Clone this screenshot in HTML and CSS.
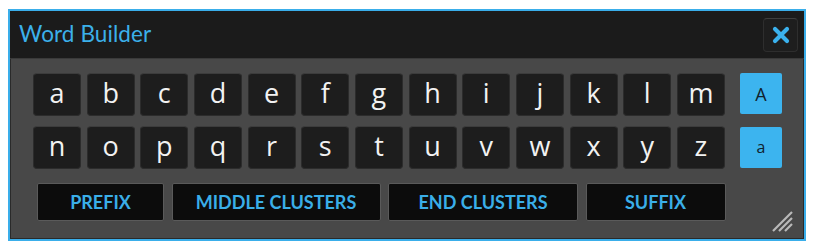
FILE: index.html
```html
<!DOCTYPE html>
<html>
<head>
<meta charset="utf-8">
<link rel="stylesheet" href="styles.css">
</head>
<body>
<div class="window">
  <div class="titlebar">
    <div class="title">Word Builder</div>
    <button class="close" aria-label="Close">
      <svg width="18" height="18" viewBox="0 0 18 18"><path d="M3 3 L15 15 M15 3 L3 15" stroke="#3bb2ee" stroke-width="4.2" stroke-linecap="round"/></svg>
    </button>
  </div>
  <div class="content">
    <div class="keyboard">
      <div class="rows">
        <div class="row">
          <div class="key">a</div><div class="key">b</div><div class="key">c</div><div class="key">d</div><div class="key">e</div><div class="key">f</div><div class="key">g</div><div class="key">h</div><div class="key">i</div><div class="key">j</div><div class="key">k</div><div class="key">l</div><div class="key">m</div>
        </div>
        <div class="row">
          <div class="key">n</div><div class="key">o</div><div class="key">p</div><div class="key">q</div><div class="key">r</div><div class="key">s</div><div class="key">t</div><div class="key">u</div><div class="key">v</div><div class="key">w</div><div class="key">x</div><div class="key">y</div><div class="key">z</div>
        </div>
      </div>
      <div class="cases">
        <div class="case">A</div>
        <div class="case lower">a</div>
      </div>
    </div>
    <div class="groups">
      <div class="group g-prefix">PREFIX</div>
      <div class="group g-middle">MIDDLE CLUSTERS</div>
      <div class="group g-end">END CLUSTERS</div>
      <div class="group g-suffix">SUFFIX</div>
    </div>
    <svg class="grip" width="22" height="22" viewBox="0 0 22 22">
      <path d="M2 21 L21 2 M8 21 L21 8 M14 21 L21 14" stroke="#b9b9b9" stroke-width="2.2"/>
    </svg>
  </div>
</div>
</body>
</html>
```
FILE: styles.css
```css
html, body {
  margin: 0;
  padding: 0;
  background: #ffffff;
}
body {
  padding: 9px 0 0 8px;
}
.window {
  position: relative;
  width: 798px;
  height: 232px;
  box-sizing: border-box;
  border: 2px solid #3aaeea;
  background: #484848;
  box-shadow: inset 0 0 0 1px #2a2a2a;
  display: flex;
  flex-direction: column;
  font-family: "Lato", "Open Sans", sans-serif;
}
.titlebar {
  height: 47px;
  flex: none;
  background: #1b1b1b;
  border-bottom: 1px solid #3a3a3a;
  display: flex;
  align-items: center;
  justify-content: space-between;
  padding: 0 6px 0 9px;
}
.title {
  color: #3bb0ea;
  font-size: 22.5px;
  font-weight: 400;
  letter-spacing: 0.1px;
  margin-bottom: 3px;
}
.close {
  width: 35px;
  height: 34px;
  margin-top: 1px;
  background: #1e1e1e;
  border: 1px solid #2e2e2e;
  border-top-color: #3e3e3e;
  border-radius: 4px;
  display: flex;
  align-items: center;
  justify-content: center;
  padding: 0;
}
.content {
  flex: 1;
  position: relative;
  padding: 14px 0 0 23px;
}
.keyboard {
  display: flex;
  gap: 15px;
}
.rows {
  display: flex;
  flex-direction: column;
  gap: 10px;
}
.row {
  display: flex;
  gap: 5.67px;
}
.key {
  width: 48px;
  height: 43px;
  box-sizing: border-box;
  background: #1d1d1d;
  border: 1px solid #2c2c2c;
  border-top-color: #3c3c3c;
  border-radius: 4px;
  color: #f2f2f2;
  font-family: "Open Sans", sans-serif;
  font-size: 27px;
  line-height: 38px;
  text-align: center;
}
.cases {
  display: flex;
  flex-direction: column;
  gap: 13px;
}
.case {
  width: 42px;
  height: 41px;
  background: #3cb4ef;
  border-radius: 2px;
  color: #10222e;
  font-family: "Open Sans", sans-serif;
  font-size: 18px;
  display: flex;
  align-items: center;
  justify-content: center;
}
.case.lower {
  font-size: 16px;
  padding-bottom: 2px;
  box-sizing: border-box;
}
.groups {
  display: flex;
  gap: 7.5px;
  margin-top: 14px;
  margin-left: 4px;
}
.group {
  height: 38px;
  box-sizing: border-box;
  background: #0c0c0c;
  border: 1px solid #5a5a5a;
  border-radius: 2px;
  color: #3aaee8;
  font-size: 18px;
  font-weight: 700;
  display: flex;
  align-items: center;
  justify-content: center;
}
.g-prefix { width: 127px; }
.g-middle { width: 209px; }
.g-end { width: 190px; }
.g-suffix { width: 140px; }
.grip {
  position: absolute;
  right: 11px;
  bottom: 7px;
}
```
